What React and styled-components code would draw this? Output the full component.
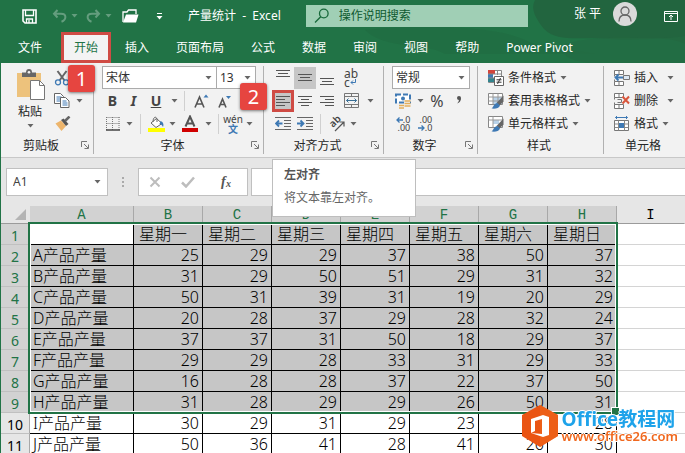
import React, { Component } from 'react'
import styled, { createGlobalStyle } from 'styled-components'

const green = '#217346'
const ink = '#444'
const blue = '#3e79b4'

const GlobalStyle = createGlobalStyle`
  * {
    box-sizing: border-box;
  }

  body {
    margin: 0;
    background: #e6e6e6;
    color: #262626;
    font-family: 'Noto Sans', 'Noto Sans CJK SC', sans-serif;
    font-size: 12px;
    line-height: 16px;
  }

  button, input, select {
    margin: 0;
    padding: 0;
    border: 0;
    border-radius: 0;
    background: none;
    color: inherit;
    font: inherit;
  }

  svg {
    display: block;
    flex: none;
  }
`

const Window = styled.div`
  height: 100vh;
  overflow: hidden;
  border-left: 1px solid ${green};
`

// header
const Header = styled.header`
  position: relative;
  background: ${green};
  color: #fff;
`

const Backdrop = styled.svg`
  position: absolute;
  top: 0;
  right: 0;
  height: 100%;
`

const TitleBar = styled.div`
  position: relative;
  display: flex;
  align-items: center;
  height: 32px;
  padding-right: 1px;
`

const QuickAccess = styled.div`
  display: flex;
  align-items: center;
  padding-left: 21px;
`

const QuickButton = styled.button`
  display: flex;
  align-items: center;
  justify-content: space-between;
  width: ${props => props.$wide ? 26 : 18}px;
  height: 22px;
  margin-right: ${props => props.$space || 8}px;
  opacity: ${props => props.$dim ? 0.3 : 1};
`

const DocumentTitle = styled.div`
  margin: 0 25px 0 25px;
  white-space: nowrap;
`

const SearchBox = styled.label`
  flex: 1;
  display: flex;
  align-items: center;
  gap: 9px;
  height: 22px;
  padding-left: 8px;
  background: #a0cfb5;
  color: #0f5a30;
`

const SearchInput = styled.input`
  flex: 1;
  min-width: 0;

  &::placeholder {
    color: #0f5a30;
    opacity: 1;
  }
`

const UserName = styled.span`
  margin: 0 12px 4px 46px;
`

const Avatar = styled.button`
  display: flex;
  align-items: center;
  justify-content: center;
  width: 24px;
  height: 24px;
  margin: 0 27px 4px 0;
  border-radius: 50%;
  background: #dadada;
`

const Tabs = styled.nav`
  position: relative;
  display: flex;
  gap: 1px;
  height: 31px;
  padding-left: 4px;
`

const Tab = styled.a`
  position: relative;
  display: flex;
  align-items: center;
  height: 31px;
  padding: 0 ${props => props.$active ? 10 : 13}px;
  margin-right: ${props => props.$file ? 5 : 0}px;
  border: ${props => props.$active ? '3px solid #cf4b44' : '0'};
  background: ${props => props.$active ? '#f3f3f3' : 'none'};
  color: ${props => props.$active ? green : '#fff'};
  text-decoration: none;
  white-space: nowrap;
`

const Badge = styled.span`
  position: absolute;
  z-index: 2;
  top: ${props => props.$top}px;
  left: ${props => props.$left}px;
  width: 27px;
  height: 27px;
  border-radius: 3px;
  background: #e64540;
  box-shadow: 0 1px 3px rgba(0, 0, 0, 0.5);
  color: #fff;
  font-size: 20px;
  line-height: 27px;
  text-align: center;
`

// ribbon
const Ribbon = styled.section`
  display: flex;
  height: 95px;
  padding-top: 3px;
  border-bottom: 1px solid #c8c8c8;
  background: #f2f2f2;
`

const Group = styled.div`
  flex: ${props => props.$grow ? '1 0 auto' : 'none'};
  display: flex;
  flex-direction: column;
  width: ${props => props.$width ? `${props.$width}px` : 'auto'};
  height: 88px;
  padding-left: 8px;
  border-right: ${props => props.$grow ? '0' : '1px solid #b1b1b1'};
`

const GroupFooter = styled.div`
  display: flex;
  align-items: center;
  height: 19px;
  margin: auto 0 -1px -8px;
  padding-right: 3px;
`

const GroupName = styled.span`
  flex: 1;
  text-align: center;
`

const Row = styled.div`
  display: flex;
  align-items: center;
  height: 23px;
`

const Columns = styled.div`
  display: flex;
`

const Tool = styled.button`
  display: flex;
  align-items: center;
  justify-content: center;
  width: ${props => props.$width || 22}px;
  height: 22px;
  border: ${props => props.$marked ? '3px solid #cf4b44' : '0'};
  background: ${props => props.$pressed ? '#c6c6c6' : 'none'};
  color: ${ink};
  font-size: ${props => props.$size || 14}px;
  font-weight: ${props => props.$bold ? 700 : 400};
  font-style: ${props => props.$italic ? 'italic' : 'normal'};
  text-decoration: ${props => props.$underline ? 'underline' : 'none'};
`

const Divider = styled.span`
  width: 1px;
  height: 20px;
  margin: 0 ${props => props.$space || 4}px;
  background: #d0d0d0;
`

const PasteButton = styled.button`
  display: flex;
  flex-direction: column;
  align-items: center;
  gap: 4px;
  width: 40px;
  height: 66px;
  margin: 3px 3px 0 1px;
  color: #262626;
`

const LabelButton = styled.button`
  display: flex;
  align-items: center;
  gap: 4px;
  height: 23px;
  margin-left: 2px;
  white-space: nowrap;
`

const LabelText = styled.span`
  min-width: ${props => props.$wide ? 29 : 0}px;
  text-align: left;
`

const DropdownBox = styled.span`
  display: grid;
  align-items: center;
  width: ${props => props.$width}px;
  height: 23px;
  margin-right: -1px;
  border: 1px solid #ababab;
  background: #fff;

  > * {
    grid-area: 1 / 1;
  }

  > svg {
    justify-self: end;
    margin-right: 4px;
    pointer-events: none;
  }
`

const Select = styled.select`
  width: 100%;
  height: 20px;
  padding-left: 3px;
  appearance: none;
  color: #333;
`

const Anchor = styled.div`
  position: relative;
`

const Tooltip = styled.div`
  position: absolute;
  z-index: 3;
  top: 69px;
  left: 0;
  width: 144px;
  height: 58px;
  padding: 7px 11px;
  border: 1px solid #bebebe;
  background: #fff;
  color: #666;
  white-space: nowrap;
`

const TooltipTitle = styled.strong`
  display: block;
  margin-bottom: 7px;
  color: #555;
`

// formula bar
const FormulaBar = styled.div`
  display: flex;
  height: 48px;
  padding: 10px 0 10px 5px;
`

const NameBox = styled.div`
  display: flex;
  align-items: center;
  width: 102px;
  border: 1px solid #c0c0c0;
  background: #fff;
`

const NameInput = styled.input`
  flex: 1;
  min-width: 0;
  padding-left: 6px;
  color: ${ink};
`

const NameToggle = styled.button`
  padding: 8px 6px;
`

const Grip = styled.span`
  display: flex;
  align-items: center;
  justify-content: center;
  width: 30px;
`

const FormulaTools = styled.div`
  display: flex;
  align-items: center;
  justify-content: space-around;
  width: 110px;
  margin-right: 3px;
  border: 1px solid #c0c0c0;
  background: #fff;
`

const FormulaInput = styled.input`
  flex: 1;
  min-width: 0;
  padding: 0 6px;
  border: 1px solid #c0c0c0;
  border-right: 0;
  background: #fff;
`

// sheet
const SheetArea = styled.main`
  position: relative;
`

const Sheet = styled.table`
  width: 100%;
  table-layout: fixed;
  border-spacing: 0;
  background: #fff;
  color: #000;
  font-family: 'Noto Sans', 'Noto Sans CJK SC', sans-serif;
`

const Col = styled.col`
  width: ${props => props.$width ? `${props.$width}px` : 'auto'};
`

const ColumnHead = styled.th`
  height: 18px;
  padding: 0;
  border-right: 1px solid ${props => props.$selected ? '#a8a8a8' : '#e6e6e6'};
  border-bottom: 1px solid #9b9b9b;
  background: ${props => props.$selected ? '#d2d2d2' : '#e6e6e6'};
  color: ${props => props.$selected ? green : '#000'};
  font-family: 'Liberation Mono', monospace;
  font-size: 14px;
  font-weight: 400;
  line-height: 16px;
`

const Corner = styled(ColumnHead)`
  svg {
    margin: 0 3px 0 auto;
  }
`

const RowHead = styled.th`
  height: 21px;
  padding: 4px 0 0;
  border-right: 1px solid #a8a8a8;
  border-bottom: 1px solid #c0c0c0;
  background: ${props => props.$selected ? '#d2d2d2' : '#e6e6e6'};
  color: ${props => props.$selected ? green : '#000'};
  font-size: 14px;
  font-weight: 400;
  line-height: 16px;
`

const Cell = styled.td`
  height: 21px;
  padding: 0 ${props => props.$number ? 3 : 0}px 0 ${props => props.$indent || 3}px;
  border-right: 1px solid #000;
  border-bottom: 1px solid #000;
  background: ${props => props.$selected ? '#c6c6c6' : '#fff'};
  font-size: 16px;
  font-weight: 300;
  line-height: 20px;
  text-align: ${props => props.$number ? 'right' : 'left'};
  white-space: nowrap;
`

const BlankCell = styled.td`
  padding: 0;
  border-bottom: 1px solid #d4d4d4;
`

const Selection = styled.div`
  position: absolute;
  top: 16px;
  left: 27px;
  width: 590px;
  height: 192px;
  border: 2px solid ${green};
  box-shadow: inset 0 0 0 1px #fff;
  pointer-events: none;

  &::after {
    content: '';
    position: absolute;
    right: -4px;
    bottom: -4px;
    width: 7px;
    height: 7px;
    border: 1px solid #fff;
    background: ${green};
  }
`

// site mark over the sheet
const SiteMark = styled.a`
  position: fixed;
  right: 7px;
  bottom: 6px;
  display: flex;
  align-items: center;
  gap: 4px;
  text-decoration: none;
`

const SiteText = styled.span`
  display: flex;
  flex-direction: column;
  text-shadow: 1px 0 #fff, -1px 0 #fff, 0 1px #fff, 0 -1px #fff;
  white-space: nowrap;
`

const SiteName = styled.strong`
  color: #1ea3ea;
  font-size: 19px;
  line-height: 20px;
`

const SiteUrl = styled.span`
  color: #f0681e;
  font-size: 13px;
  font-weight: 600;
  line-height: 14px;
`

const Caret = ({ color = '#666' }) => (
  <svg width='7' height='4' viewBox='0 0 7 4'>
    <path d='M0.5 0h6L3.5 3.6z' fill={color} />
  </svg>
)

const Launcher = () => (
  <svg width='9' height='9' viewBox='0 0 9 9' fill='none' stroke='#777'>
    <path d='M0.5 6V0.5H6M3 3l4 4M7.5 3.5v4h-4' />
  </svg>
)

const SaveIcon = () => (
  <svg width='15' height='15' viewBox='0 0 15 15' fill='none' stroke='#fff' strokeWidth='1.6'>
    <path d='M1 1h13v13H3L1 12z' />
    <path d='M3.5 1v5.5h8V1M4.5 14v-4h6v4M7 11v3' strokeWidth='1.3' />
  </svg>
)

const UndoIcon = ({ flip }) => (
  <svg width='15' height='14' viewBox='0 0 15 14' fill='none' stroke='#fff' strokeWidth='2'>
    <path
      d='M5.5 1L2 4.8l3.5 3.7M2 4.8h7c6 0 5.500 6 0.500 8'
      transform={flip ? 'translate(15 0) scale(-1 1)' : undefined}
    />
  </svg>
)

const FolderIcon = () => (
  <svg width='17' height='14' viewBox='0 0 17 14'>
    <path d='M1 13V3h4l1.500-2H14v4' fill='none' stroke='#fff' strokeWidth='1.300' />
    <path d='M1 13.500L4 5.500h12.500l-2.500 8z' fill='#fff' />
  </svg>
)

const SearchIcon = () => (
  <svg width='16' height='16' viewBox='0 0 16 16' fill='none' stroke='#17693a' strokeWidth='1.300'>
    <circle cx='9.800' cy='5.500' r='4.300' />
    <path d='M6.700 8.700L1 14.500' />
  </svg>
)

const PasteIcon = () => (
  <svg width='29' height='31' viewBox='0 0 29 31'>
    <path d='M1 4h24v24H1z' fill='#edc27c' />
    <path d='M6 8V3.500h4C10 1 11 0 13 0s3 1 3 3.500h4V8z' fill='#666' />
    <circle cx='13' cy='3.200' r='1.300' fill='#f2f2f2' />
    <path d='M14.500 11.500h9l5 5v14h-14z' fill='#fff' stroke='#777' />
    <path d='M23.500 11.500v5h5' fill='none' stroke='#777' />
  </svg>
)

const CutIcon = () => (
  <svg width='16' height='16' viewBox='0 0 16 16' fill='none'>
    <path d='M3.500 1l7 9.500M12.500 1l-7 9.500' stroke='#666' strokeWidth='2' />
    <circle cx='4' cy='12.300' r='2.500' stroke={blue} strokeWidth='1.300' />
    <circle cx='12' cy='12.300' r='2.500' stroke={blue} strokeWidth='1.300' />
  </svg>
)

const CopyIcon = () => (
  <svg width='16' height='15' viewBox='0 0 16 15' fill='#fff' stroke='#666'>
    <path d='M0.500 0.500h6l3 3v7h-9z' />
    <path d='M2.500 4h5M2.500 6h5M2.500 8h4' stroke={blue} />
    <path d='M6.500 4.500h5l3.500 3.500v6.500H6.500z' />
    <path d='M8.500 8h4M8.500 10h5M8.500 12h5' stroke={blue} />
  </svg>
)

const BrushIcon = () => (
  <svg width='16' height='15' viewBox='0 0 16 15'>
    <path d='M0.500 7.500L6 4.500l5 5.500-4.500 5z' fill='#edb56c' />
    <path d='M6 4l2.500-1.500 5 5.500-2.500 2z' fill='#555' />
    <path d='M10 5l4.500-4.500' stroke='#666' strokeWidth='2.500' />
  </svg>
)

const BordersIcon = () => (
  <svg width='14' height='14' viewBox='0 0 14 14' fill='none' stroke='#777'>
    <path d='M0.500 0.500h13M0.500 6.500h13M0.500 0v13M6.500 0v13M13 0v13' strokeDasharray='1 1' />
    <path d='M0 13h14' stroke='#444' strokeWidth='1.500' />
  </svg>
)

const FillIcon = () => (
  <svg width='17' height='16' viewBox='0 0 17 16'>
    <path d='M3 7l5.500-4.500L14 7.500 8 11.500z' fill='#fff' stroke='#666' />
    <path d='M5 6c0-6 4-6 4-2v2' fill='none' stroke='#666' />
    <path d='M12.500 5c3 1 3.500 4 2.500 6-1-2-2-3-3.500-3z' fill={blue} />
    <path d='M0 12h17v4H0z' fill='#ff0' />
  </svg>
)

const FontColorIcon = () => (
  <svg width='16' height='17' viewBox='0 0 16 17'>
    <path d='M3.500 11.500L8 1.500l4.500 10M5.200 8.500h5.600' fill='none' stroke='#555' strokeWidth='2' />
    <path d='M0 13h16v4H0z' fill='#d00000' />
  </svg>
)

// the "A" with a small triangle that grows or shrinks the font
const FontSizeIcon = ({ small }) => (
  <svg width='15' height='14' viewBox='0 0 15 14'>
    <path
      d={small ? 'M2 13.500L5.500 5 9 13.500M3.200 10.500h4.600' : 'M1 13.500L5.500 3 10 13.500M2.700 10h5.600'}
      fill='none'
      stroke='#555'
      strokeWidth='1.600'
    />
    <path d={small ? 'M9 2h5l-2.500 3z' : 'M9.500 3.500h5L12 0.500z'} fill={blue} />
  </svg>
)

const Phonetic = styled.span`
  display: flex;
  flex-direction: column;
  align-items: center;
  font-size: 10px;
  line-height: 10px;

  span {
    color: ${blue};
    font-weight: 700;
  }
`

const linePaths = {
  left: ['M0 1.500h14', 'M0 4.500h9', 'M0 7.500h14', 'M0 10.500h9'],
  center: ['M0 1.500h14', 'M3 4.500h8', 'M0 7.500h14', 'M3 10.500h8'],
  right: ['M0 1.500h14', 'M5 4.500h9', 'M0 7.500h14', 'M5 10.500h9'],
  top: ['M0 -1.500h14', 'M2 1.500h10', 'M0 4.500h14'],
  middle: ['M0 2.500h14', 'M2 5.500h10', 'M0 8.500h14'],
  bottom: ['M0 6.500h14', 'M2 9.500h10', 'M0 12.500h14']
}

const LinesIcon = ({ kind }) => (
  <svg width='14' height='12' viewBox='0 0 14 12' overflow='visible' stroke='#555'>
    <path d={linePaths[kind].join('')} />
  </svg>
)

const IndentIcon = ({ inward }) => (
  <svg width='16' height='13' viewBox='0 0 16 13' fill='none' stroke='#666'>
    <path d='M0 0.500h16M9 3.500h7M9 6.500h7M9 9.500h7M0 12.500h16' />
    <path
      d={inward ? 'M0 6.500h6M3.500 3.500l3 3-3 3' : 'M1 6.500h6.500M4 3.500l-3 3 3 3'}
      stroke={blue}
      strokeWidth='1.800'
    />
  </svg>
)

const Wrap = styled.span`
  display: flex;
  flex-direction: column;
  font-size: 12px;
  line-height: 9px;
  text-align: left;
`

const WrapLine = styled.span`
  display: flex;
  align-items: center;
`

const ReturnIcon = () => (
  <svg width='6' height='6' viewBox='0 0 6 6' fill='none' stroke={blue}>
    <path d='M5.500 0v3.500H1M3 1.500l-2 2 2 2' />
  </svg>
)

const MergeIcon = () => (
  <svg width='15' height='15' viewBox='0 0 15 15' fill='none' stroke='#777'>
    <path d='M0.500 0.500h14v14H0.500zM0.500 3.500h14M0.500 11.500h14M7.500 0.500v3M7.500 11.500v3' />
    <path d='M2.500 7.500h10M4.500 5.500l-2 2 2 2M10.500 5.500l2 2-2 2' stroke='#3a6f95' />
  </svg>
)

const OrientationIcon = () => (
  <svg width='17' height='16' viewBox='0 0 17 16' overflow='visible' fill='none' stroke='#555'>
    <text x='0' y='0' transform='translate(5 12) rotate(-45)' fill='#444' stroke='none' fontSize='10' fontWeight='600'>ab</text>
    <path d='M7 15l9-9M11.500 6H16v4.500' strokeWidth='1.200' />
  </svg>
)

const CurrencyIcon = () => (
  <svg width='16' height='16' viewBox='0 0 16 16' fill='none'>
    <path d='M1 1.500h14v8H1z' fill='#fff' stroke={blue} strokeWidth='2' strokeDasharray='5 2' />
    <circle cx='8' cy='5.500' r='2' fill={blue} />
    <path d='M9 7h6v8H9zM4 11h5v4H4z' fill='#f2f2f2' />
    <path d='M9.500 8h6M9.500 10.500h6M9.500 13h6M4 12.500h5M4 15h5' stroke='#e3ae5c' strokeWidth='1.600' />
  </svg>
)

const SeparatorIcon = () => (
  <svg width='6' height='12' viewBox='0 0 6 12' fill='#555'>
    <circle cx='3' cy='3' r='2' />
    <path d='M5 3c0 3-1.500 5-4 5.500 1.500-1.500 2-2.500 2-4.500z' />
  </svg>
)

const Decimal = styled.span`
  display: flex;
  flex-direction: column;
  align-items: flex-end;
  font-size: 9px;
  line-height: 8px;

  span {
    display: flex;
    align-items: center;
  }
`

const ArrowIcon = ({ right }) => (
  <svg width='7' height='6' viewBox='0 0 7 6' fill='none' stroke={blue} strokeWidth='1.300'>
    <path d={right ? 'M0 3h6M3.500 0.500L6 3 3.500 5.500' : 'M7 3H1M3.500 0.500L1 3l2.500 2.500'} />
  </svg>
)

const ConditionalIcon = () => (
  <svg width='16' height='16' viewBox='0 0 16 16' fill='none'>
    <path d='M0.500 0.500h13v12h-13z' fill='#fff' stroke='#888' />
    <path d='M0 0h7v4H0z' fill='#d2453c' />
    <path d='M0 4h5v4H0z' fill='#3e79b4' />
    <path d='M0 8h7v4H0z' fill='#32848d' />
    <path d='M0 4h14M0 8h8M9.500 0v5' stroke='#888' />
    <path d='M6.500 6.500h9v9h-9z' fill='#fff' stroke='#666' />
    <path d='M8.500 9.800h5M8.500 12.200h5M12.500 8l-3 6' stroke='#333' />
  </svg>
)

const TableStyleIcon = ({ plain }) => (
  <svg width='16' height='16' viewBox='0 0 16 16' fill='none'>
    <path d='M0.500 0.500h14v11h-14z' fill='#fff' stroke='#888' />
    <path d={plain ? 'M5 4h6v4H5z' : 'M5 4h9v7H5z'} fill='#b9d3ea' />
    {plain
      ? <path d='M0.500 4h14M5 0.500v11' stroke='#999' />
      : <path d='M0.500 4h14M0.500 8h14M5 0.500v11M10 0.500v11' stroke='#999' />}
    <path d='M15.500 2.500v6l-4 4-3-2.500z' fill='#666' />
    <path d='M3.500 15.500c2-1 2-5 6-5.500l2.500 2.500c-1 3-5 3.500-8.500 3z' fill={blue} />
  </svg>
)

const CellsIcon = ({ kind }) => (
  <svg width='16' height='16' viewBox='0 0 16 16' fill='none'>
    {kind === 'format' ? (
      <g>
        <path d='M1.500 1.500h12M3 0L1.500 1.500 3 3M12 0l1.500 1.500L12 3' stroke={blue} />
        <path d='M0.500 4.500h14v10H0.500z' fill='#fff' stroke='#777' />
        <path d='M0.500 8h14M0.500 11.500h14M4.500 4.500v10M10.500 4.500v10' stroke='#888' />
        <path d='M5 7h5v5H5z' fill={blue} />
      </g>
    ) : (
      <g>
        <path d='M0.500 0.500h9v4h-9zM0.500 11.500h9v4h-9zM5 0.500v4M5 11.500v4M0.500 4.500v2M0.500 9.500v2' fill='#fff' stroke='#777' />
        {kind === 'insert' ? (
          <g>
            <path d='M9.500 5.500h6v4h-6z' fill='#dbe8f4' stroke='#777' />
            <path d='M1 7.500h8M4.500 4.500l-3 3 3 3' stroke={blue} strokeWidth='1.800' />
          </g>
        ) : (
          <g>
            <path d='M3.500 6.500h4v3h-4' stroke='#777' />
            <path d='M8.500 3.500l6.500 7M15 3.500l-6.500 7' stroke='#d9573d' strokeWidth='2' />
          </g>
        )}
      </g>
    )}
  </svg>
)

const HeaderBackdrop = () => (
  <Backdrop width='380' viewBox='0 0 380 63' preserveAspectRatio='xMaxYMin slice'>
    <path d='M230 0h150v44c-20-10-45-2-75-5s-52 4-66-10c-8-10-14-20-9-29z' fill='#22653f' />
    <path d='M60 30c60-6 130-4 160 10 20 10 40 8 70 14H140c-20-12-60-4-80-24z' fill='#1f6a3f' opacity='0.5' />
    <path d='M260 44c40-12 90-2 120-8v27h-90c-20 0-40-8-30-19z' fill='#236b43' opacity='0.7' />
  </Backdrop>
)

const tabs = ['文件', '开始', '插入', '页面布局', '公式', '数据', '审阅', '视图', '帮助', 'Power Pivot']
const letters = ['A', 'B', 'C', 'D', 'E', 'F', 'G', 'H', 'I']
const widths = [29, 104, 69, 69, 69, 69, 69, 69, 69, 0]
const selectedRows = 9

const rows = [
  ['', '星期一', '星期二', '星期三', '星期四', '星期五', '星期六', '星期日'],
  ['A产品产量', 25, 29, 29, 37, 38, 50, 37],
  ['B产品产量', 31, 29, 50, 51, 29, 31, 32],
  ['C产品产量', 50, 31, 39, 31, 19, 20, 29],
  ['D产品产量', 20, 28, 37, 29, 28, 32, 24],
  ['E产品产量', 37, 37, 31, 50, 18, 29, 37],
  ['F产品产量', 29, 29, 28, 33, 31, 29, 33],
  ['G产品产量', 16, 28, 28, 37, 22, 37, 50],
  ['H产品产量', 31, 28, 29, 29, 26, 50, 31],
  ['I产品产量', 30, 29, 31, 29, 23, 31, 28],
  ['J产品产量', 50, 36, 41, 28, 41, 26, 30]
]

const MenuArrow = ({ label, width = 12 }) => (
  <Tool $width={width} aria-label={label}><Caret /></Tool>
)

const Dropdown = ({ label, value, width }) => (
  <DropdownBox $width={width}>
    <Select aria-label={label}>
      <option>{value}</option>
    </Select>
    <Caret />
  </DropdownBox>
)

const RibbonGroup = ({ name, width, grow, launcher, children }) => (
  <Group $width={width} $grow={grow}>
    {children}
    <GroupFooter>
      <GroupName>{name}</GroupName>
      {launcher && <button aria-label={`${name}设置`}><Launcher /></button>}
    </GroupFooter>
  </Group>
)

class App extends Component {
  state = {
    search: '',
    formula: '',
    cell: 'A1'
  }

  handleChange = event => {
    const { name, value } = event.target
    this.setState({ [name]: value })
  }

  renderHeader () {
    return (
      <Header>
        <HeaderBackdrop />
        <TitleBar>
          <QuickAccess>
            <QuickButton aria-label='保存' $space={12}><SaveIcon /></QuickButton>
            <QuickButton aria-label='撤消' $wide $dim><UndoIcon /><Caret color='#fff' /></QuickButton>
            <QuickButton aria-label='恢复' $wide $dim $space={10}><UndoIcon flip /><Caret color='#fff' /></QuickButton>
            <QuickButton aria-label='打开' $space={16}><FolderIcon /></QuickButton>
            <button aria-label='自定义快速访问工具栏'>
              <svg width='7' height='7' viewBox='0 0 7 7' fill='#fff'>
                <path d='M1 0h5v1H1zM0.500 3h6l-3 3.500z' />
              </svg>
            </button>
          </QuickAccess>
          <DocumentTitle>产量统计&nbsp; -&nbsp; Excel</DocumentTitle>
          <SearchBox>
            <SearchIcon />
            <SearchInput
              name='search'
              aria-label='操作说明搜索'
              placeholder='操作说明搜索'
              value={this.state.search}
              onChange={this.handleChange}
            />
          </SearchBox>
          <UserName>张 平</UserName>
          <Avatar aria-label='帐户'>
            <svg width='16' height='16' viewBox='0 0 16 16' fill='none' stroke='#666' strokeWidth='1.300'>
              <circle cx='8' cy='5' r='4' />
              <path d='M2 15.500C2 11 4.500 9 8 9s6 2 6 6.500' />
            </svg>
          </Avatar>
          <QuickButton aria-label='功能区显示选项' $space={2}>
            <svg width='14' height='11' viewBox='0 0 14 11' fill='none' stroke='#fff'>
              <path d='M0.500 0.500h13v10H0.500zM0.500 2.500h13M7 9V4.500M5 6l2-2 2 2' />
            </svg>
          </QuickButton>
        </TitleBar>
        <Tabs>
          {tabs.map((title, id) => (
            <Tab
              key={title}
              href='#'
              $file={id === 0}
              $active={id === 1}
            >
              {title}
              {id === 1 && <Badge $top={30} $left={4}>1</Badge>}
            </Tab>
          ))}
        </Tabs>
      </Header>
    )
  }

  renderRibbon () {
    return (
      <Ribbon>
        <RibbonGroup name='剪贴板' width={93} launcher>
          <Columns>
            <PasteButton>
              <PasteIcon />
              粘贴
              <Caret />
            </PasteButton>
            <div>
              <Row><Tool $width={18} aria-label='剪切'><CutIcon /></Tool></Row>
              <Row>
                <Tool $width={18} aria-label='复制'><CopyIcon /></Tool>
                <MenuArrow label='复制选项' width={16} />
              </Row>
              <Row><Tool $width={20} aria-label='格式刷'><BrushIcon /></Tool></Row>
            </div>
          </Columns>
        </RibbonGroup>

        <RibbonGroup name='字体' width={170} launcher>
          <Row>
            <Dropdown label='字体' value='宋体' width={115} />
            <Dropdown label='字号' value='13' width={40} />
          </Row>
          <Row>
            <Tool $width={21} $bold>B</Tool>
            <Tool $width={21} $bold $italic>I</Tool>
            <Tool $width={24} $bold $underline>U</Tool>
            <MenuArrow label='下划线选项' />
            <Divider />
            <Tool $width={24} aria-label='增大字号'><FontSizeIcon /></Tool>
            <Tool aria-label='减小字号'><FontSizeIcon small /></Tool>
          </Row>
          <Row>
            <Tool $width={21} aria-label='边框'><BordersIcon /></Tool>
            <MenuArrow label='边框选项' />
            <Divider $space={5} />
            <Tool $width={20} aria-label='填充颜色'><FillIcon /></Tool>
            <MenuArrow label='填充颜色选项' />
            <Tool $width={24} aria-label='字体颜色'><FontColorIcon /></Tool>
            <MenuArrow label='字体颜色选项' />
            <Divider />
            <Tool $width={20} aria-label='拼音'><Phonetic>wén<span>文</span></Phonetic></Tool>
            <MenuArrow label='拼音选项' />
          </Row>
        </RibbonGroup>

        <RibbonGroup name='对齐方式' width={120} launcher>
          <Row>
            <Tool aria-label='顶端对齐'><LinesIcon kind='top' /></Tool>
            <Tool aria-label='垂直居中' $pressed><LinesIcon kind='middle' /></Tool>
            <Tool aria-label='底端对齐'><LinesIcon kind='bottom' /></Tool>
            <Tool $width={26} aria-label='自动换行'>
              <Wrap>ab<WrapLine>c<ReturnIcon /></WrapLine></Wrap>
            </Tool>
          </Row>
          <Row>
            <Anchor>
              <Tool aria-label='左对齐' $pressed $marked><LinesIcon kind='left' /></Tool>
              <Badge $top={-7} $left={-32}>2</Badge>
              <Tooltip role='tooltip'>
                <TooltipTitle>左对齐</TooltipTitle>
                将文本靠左对齐。
              </Tooltip>
            </Anchor>
            <Tool aria-label='居中'><LinesIcon kind='center' /></Tool>
            <Tool aria-label='右对齐'><LinesIcon kind='right' /></Tool>
            <Tool $width={26} aria-label='合并后居中'><MergeIcon /></Tool>
            <MenuArrow label='合并选项' />
          </Row>
          <Row>
            <Tool aria-label='减少缩进量'><IndentIcon /></Tool>
            <Tool aria-label='增加缩进量'><IndentIcon inward /></Tool>
            <Divider />
            <Tool aria-label='方向'><OrientationIcon /></Tool>
            <MenuArrow label='方向选项' />
          </Row>
        </RibbonGroup>

        <RibbonGroup name='数字' width={94} launcher>
          <Row>
            <Dropdown label='数字格式' value='常规' width={78} />
          </Row>
          <Row>
            <Tool aria-label='会计数字格式'><CurrencyIcon /></Tool>
            <MenuArrow label='会计数字格式选项' />
            <Tool $size={16}>%</Tool>
            <Tool aria-label='千位分隔样式'><SeparatorIcon /></Tool>
          </Row>
          <Row>
            <Tool aria-label='增加小数位数'>
              <Decimal><span><ArrowIcon />.0</span><span>.00</span></Decimal>
            </Tool>
            <Tool aria-label='减少小数位数'>
              <Decimal><span>.00</span><span><ArrowIcon right />.0</span></Decimal>
            </Tool>
          </Row>
        </RibbonGroup>

        <RibbonGroup name='样式' width={126}>
          <LabelButton><ConditionalIcon /><LabelText>条件格式</LabelText><Caret /></LabelButton>
          <LabelButton><TableStyleIcon /><LabelText>套用表格格式</LabelText><Caret /></LabelButton>
          <LabelButton><TableStyleIcon plain /><LabelText>单元格样式</LabelText><Caret /></LabelButton>
        </RibbonGroup>

        <RibbonGroup name='单元格' grow>
          <LabelButton><CellsIcon kind='insert' /><LabelText $wide>插入</LabelText><Caret /></LabelButton>
          <LabelButton><CellsIcon kind='delete' /><LabelText $wide>删除</LabelText><Caret /></LabelButton>
          <LabelButton><CellsIcon kind='format' /><LabelText>格式</LabelText><Caret /></LabelButton>
        </RibbonGroup>
      </Ribbon>
    )
  }

  renderFormulaBar () {
    return (
      <FormulaBar>
        <NameBox>
          <NameInput
            name='cell'
            aria-label='名称框'
            value={this.state.cell}
            onChange={this.handleChange}
          />
          <NameToggle aria-label='名称列表'><Caret /></NameToggle>
        </NameBox>
        <Grip>
          <svg width='2' height='11' viewBox='0 0 2 11' fill='#aaa'>
            <path d='M0 0h2v2H0zM0 4h2v2H0zM0 8h2v2H0z' />
          </svg>
        </Grip>
        <FormulaTools>
          <button aria-label='取消'>
            <svg width='12' height='12' viewBox='0 0 12 12' stroke='#bdbdbd' strokeWidth='2'>
              <path d='M1.500 1.500l9 9M10.500 1.500l-9 9' />
            </svg>
          </button>
          <button aria-label='输入'>
            <svg width='14' height='12' viewBox='0 0 14 12' fill='none' stroke='#bdbdbd' strokeWidth='2.500'>
              <path d='M1 6.500l4 4L13 1.500' />
            </svg>
          </button>
          <Tool aria-label='插入函数' $italic $bold $size={13}>
            <svg width='16' height='18' viewBox='0 0 16 18' overflow='visible' fill='#555' fontFamily='Liberation Serif, serif'>
              <text x='3' y='13' fontSize='14'>f</text>
              <text x='8' y='14' fontSize='10'>x</text>
            </svg>
          </Tool>
        </FormulaTools>
        <FormulaInput
          name='formula'
          aria-label='编辑栏'
          value={this.state.formula}
          onChange={this.handleChange}
        />
      </FormulaBar>
    )
  }

  renderSheet () {
    return (
      <SheetArea>
        <Sheet>
          <colgroup>
            {widths.map((width, id) => <Col key={id} $width={width} />)}
          </colgroup>
          <thead>
            <tr>
              <Corner>
                <svg width='11' height='11' viewBox='0 0 11 11'>
                  <path d='M11 0v11H0z' fill='#b4b4b4' />
                </svg>
              </Corner>
              {letters.map(letter => (
                <ColumnHead key={letter} $selected={letter !== 'I'}>{letter}</ColumnHead>
              ))}
            </tr>
          </thead>
          <tbody>
            {rows.map((row, rowId) => (
              <tr key={rowId}>
                <RowHead $selected={rowId < selectedRows}>{rowId + 1}</RowHead>
                {row.map((value, id) => (
                  <Cell
                    key={id}
                    $number={typeof value === 'number'}
                    $indent={rowId === 0 ? 5 : 3}
                    $selected={rowId < selectedRows && rowId + id > 0}
                  >
                    {value}
                  </Cell>
                ))}
                <BlankCell />
              </tr>
            ))}
          </tbody>
        </Sheet>
        <Selection />
      </SheetArea>
    )
  }

  render () {
    return (
      <Window>
        <GlobalStyle />
        {this.renderHeader()}
        {this.renderRibbon()}
        {this.renderFormulaBar()}
        {this.renderSheet()}
        <SiteMark href='http://www.office26.com'>
          <svg width='36' height='42' viewBox='0 0 36 42'>
            <path d='M18 0l18 10v21L18 42 0 31V10z' fill='#ea5413' />
            <path d='M18 0l18 10v21L18 42z' fill='#f06a1c' opacity='0.5' />
            <path d='M9 14l12-4 6 2v18l-6 2-12-4 11 1V14l-7 2v10l-4 2z' fill='#fff' />
          </svg>
          <SiteText>
            <SiteName>Office教程网</SiteName>
            <SiteUrl>www.office26.com</SiteUrl>
          </SiteText>
        </SiteMark>
      </Window>
    )
  }
}

export default App
